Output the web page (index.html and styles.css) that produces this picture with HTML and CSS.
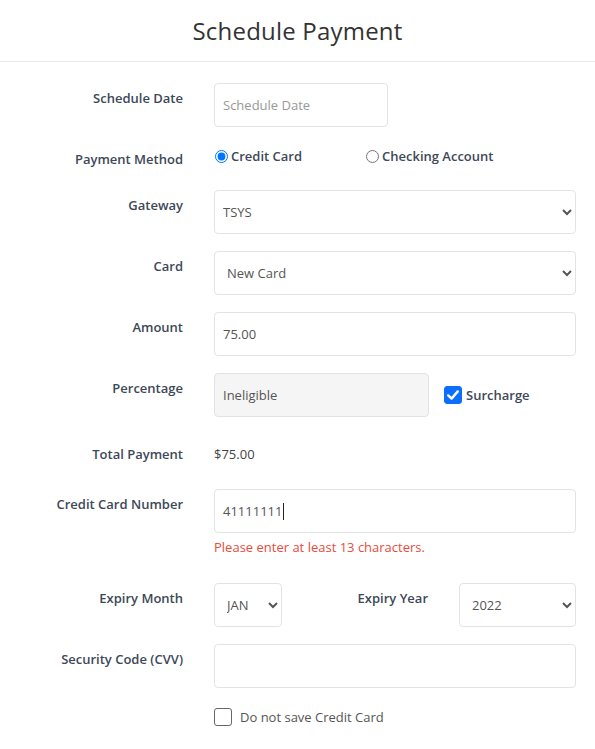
FILE: index.html
```html
<!DOCTYPE html>
<html>
<head>
<meta charset="utf-8">
<link rel="stylesheet" href="styles.css">
</head>
<body>
<div class="page">
  <header class="header"><h1 class="title">Schedule Payment</h1></header>
  <form class="form">
    <div class="row">
      <label class="label">Schedule Date</label>
      <div class="control"><input class="input input-date" type="text" placeholder="Schedule Date"></div>
    </div>
    <div class="row row-radio">
      <label class="label">Payment Method</label>
      <div class="control radios">
        <label class="radio radio-first"><input type="radio" name="pm" checked><span>Credit Card</span></label>
        <label class="radio"><input type="radio" name="pm"><span>Checking Account</span></label>
      </div>
    </div>
    <div class="row">
      <label class="label">Gateway</label>
      <div class="control"><select class="input select"><option>TSYS</option></select></div>
    </div>
    <div class="row">
      <label class="label">Card</label>
      <div class="control"><select class="input select select-card"><option>New Card</option></select></div>
    </div>
    <div class="row">
      <label class="label">Amount</label>
      <div class="control"><input class="input" type="text" value="75.00"></div>
    </div>
    <div class="row">
      <label class="label">Percentage</label>
      <div class="control inline">
        <input class="input input-pct" type="text" value="Ineligible" readonly>
        <label class="check check-on"><span class="box box-on"><svg width="18" height="18" viewBox="0 0 18 18"><path d="M4.2 9.4 L7.6 12.6 L13.8 5.4" fill="none" stroke="#fff" stroke-width="2.4" stroke-linecap="round" stroke-linejoin="round"/></svg></span><span class="check-text">Surcharge</span></label>
      </div>
    </div>
    <div class="row row-static">
      <label class="label label-static">Total Payment</label>
      <div class="control static">$75.00</div>
    </div>
    <div class="row row-cc">
      <label class="label">Credit Card Number</label>
      <div class="control">
        <div class="input input-cc">41111111<span class="caret"></span></div>
        <div class="error">Please enter at least 13 characters.</div>
      </div>
    </div>
    <div class="row">
      <label class="label">Expiry Month</label>
      <select class="input select select-month"><option>JAN</option></select>
      <label class="label label-year">Expiry Year</label>
      <select class="input select select-year"><option>2022</option></select>
    </div>
    <div class="row">
      <label class="label">Security Code (CVV)</label>
      <div class="control"><input class="input" type="text"></div>
    </div>
    <div class="row row-save">
      <div class="label"></div>
      <label class="check"><span class="box"></span><span class="save-text">Do not save Credit Card</span></label>
    </div>
  </form>
</div>
</body>
</html>
```

FILE: styles.css
```css
* { box-sizing: border-box; }
html, body { margin: 0; padding: 0; background: #fff; }
body { font-family: "Open Sans", "Liberation Sans", sans-serif; font-size: 13px; color: #555; }

.header {
  height: 62px;
  border-bottom: 1px solid #e9e9e9;
  display: flex;
  align-items: center;
  justify-content: center;
}
.title {
  margin: 0;
  font-size: 24px;
  font-weight: 500;
  color: #333;
  line-height: 32px;
  letter-spacing: 0.2px;
}

.form { padding: 21px 19px 0 0; }

.row {
  display: flex;
  align-items: flex-start;
  margin-bottom: 17px;
}
.label {
  width: 183px;
  flex: none;
  margin-right: 31px;
  text-align: right;
  font-weight: 600;
  color: #3d4858;
  line-height: 20px;
  padding-top: 5px;
}
.control { flex: 1; min-width: 0; }

.input {
  display: block;
  width: 100%;
  height: 44px;
  border: 1px solid #e3e3e3;
  border-radius: 4px;
  background: #fff;
  font-family: inherit;
  font-size: 13px;
  color: #555;
  padding: 0 8px;
  outline: none;
}
.input::placeholder { color: #999; }
.input-date { width: 174px; }

.select { padding: 0 4px; }
.select-card { padding-left: 8px; }

.row-radio { min-height: 29px; }
.radios { display: flex; padding-top: 2px; }
.radio {
  display: flex;
  align-items: center;
  height: 20px;
  font-weight: 600;
  color: #3d4858;
}
.radio-first { width: 151px; }
.radio input { margin: 0 3px 0 1px; width: 13px; height: 13px; }

.inline { display: flex; align-items: center; }
.input-pct { width: 215px; flex: none; background: #f5f5f5; }

.check { display: flex; align-items: center; }
.check-on { margin-left: 15px; }
.box {
  width: 18px;
  height: 18px;
  border: 1px solid #666;
  border-radius: 3px;
  background: #fff;
  flex: none;
  display: block;
}
.box-on { background: #0d6efd; border-color: #0d6efd; position: relative; }
.box-on svg { position: absolute; left: -1px; top: -1px; }
.check-text { margin-left: 4px; font-weight: 600; color: #3d4858; }

.row-static { min-height: 38px; }
.label-static { padding-top: 10px; }
.static { line-height: 20px; padding-top: 10px; color: #444; }

.row-cc { margin-bottom: 26px; }
.input-cc { display: flex; align-items: center; color: #555; }
.caret { display: inline-block; width: 1px; height: 17px; background: #222; margin-left: 1px; }
.error { color: #e74c3c; line-height: 20px; margin-top: 4px; }

.select-month { width: 68px; flex: none; padding: 0 6px 0 8px; }
.label-year { width: auto; flex: 1; margin-right: 31px; }
.select-year { width: 117px; flex: none; padding: 0 4px 0 8px; }

.row-save { align-items: center; padding-top: 3px; }
.row-save .box { border-color: #666; }
.save-text { margin-left: 8px; color: #555; }
```
